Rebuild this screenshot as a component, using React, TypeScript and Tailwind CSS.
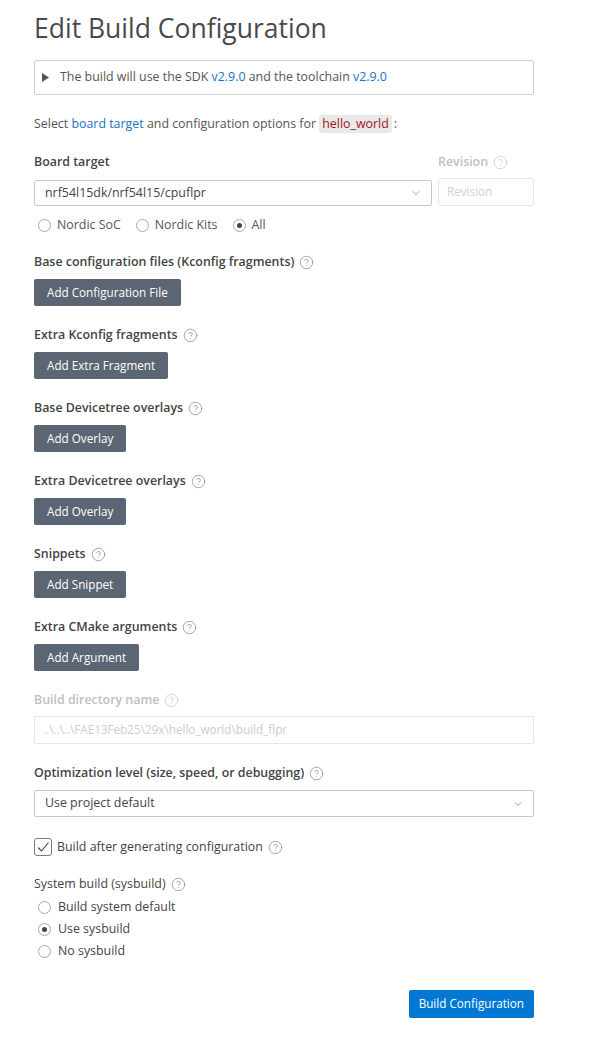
import React from "react";
import { ChevronDown, CircleHelp } from "lucide-react";

const Help = ({ disabled = false }: { disabled?: boolean }) => (
  <CircleHelp size={15} strokeWidth={1.2} className={disabled ? "text-[#c4c4c4] ml-[5px]" : "text-[#8a8a8a] ml-[5px]"} />
);

const Radio = ({ checked = false }: { checked?: boolean }) => (
  <span className="w-[13px] h-[13px] rounded-full border border-[#a8a8a8] bg-white flex items-center justify-center shrink-0">
    {checked && <span className="w-[5px] h-[5px] rounded-full bg-[#444]" />}
  </span>
);

const Label = ({ children, disabled = false }: { children: React.ReactNode; disabled?: boolean }) => (
  <div className={`h-[20px] flex items-center font-semibold ${disabled ? "text-[#c0c0c0]" : "text-[#444]"}`}>
    {children}
    <Help disabled={disabled} />
  </div>
);

const GrayButton = ({ children }: { children: React.ReactNode }) => (
  <button className="h-[27px] px-[13px] rounded-[2px] bg-[#5b6573] text-white text-[11.7px] mt-[7px]">{children}</button>
);

const Section = ({ label, button }: { label: string; button: string }) => (
  <div className="mt-[19px] flex flex-col items-start">
    <Label>{label}</Label>
    <GrayButton>{button}</GrayButton>
  </div>
);

export default function App() {
  return (
    <div
      className="w-[596px] min-h-[1048px] bg-white pl-[34px] pr-[62px] text-[12.4px] text-[#555]"
      style={{ fontFamily: '"Open Sans", "Noto Sans", sans-serif' }}
    >
      <h1 className="pt-[10px] h-[46px] leading-[36px] text-[26.5px] text-[#4a4a4a] font-normal">Edit Build Configuration</h1>

      <div className="mt-[14px] h-[35px] border border-[#cfcfcf] rounded-[2px] flex items-center px-[7px]">
        <svg width="8" height="9" viewBox="0 0 8 9" className="mr-[10px]">
          <path d="M0 0 L7 4.5 L0 9 Z" fill="#555" />
        </svg>
        <span>
          The build will use the SDK <span className="text-[#1a73c6]">v2.9.0</span> and the toolchain{" "}
          <span className="text-[#1a73c6]">v2.9.0</span>
        </span>
      </div>

      <div className="mt-[19px] h-[20px] flex items-center">
        Select&nbsp;<span className="text-[#1a73c6]">board target</span>&nbsp;and configuration options for&nbsp;
        <span className="bg-[#e9e9e9] text-[#a31515] rounded-[3px] px-[3px] leading-[18px]">hello_world</span>
        <span className="ml-[2px]">:</span>
      </div>

      <div className="mt-[18px] flex gap-[6px]">
        <div className="flex-1 flex flex-col">
          <div className="h-[20px] flex items-center font-semibold text-[#444]">Board target</div>
          <div className="mt-[8px] h-[26px] border border-[#c8c8c8] rounded-[2px] flex items-center justify-between pl-[10px] pr-[9px] text-[#444]">
            <span>nrf54l15dk/nrf54l15/cpuflpr</span>
            <ChevronDown size={12} strokeWidth={1.4} className="text-[#777]" />
          </div>
        </div>
        <div className="w-[96px] flex flex-col">
          <Label disabled>Revision</Label>
          <div className="mt-[6px] h-[28px] border border-[#e6e6e6] rounded-[2px] flex items-center px-[8px] text-[#cfcfcf] text-[11.7px]">
            Revision
          </div>
        </div>
      </div>

      <div className="mt-[9px] h-[20px] flex items-center pl-[4px] text-[#555]">
        <Radio />
        <span className="ml-[6px] mr-[15px]">Nordic SoC</span>
        <Radio />
        <span className="ml-[6px] mr-[15px]">Nordic Kits</span>
        <Radio checked />
        <span className="ml-[6px]">All</span>
      </div>

      <div className="-mt-[2px]">
        <Section label="Base configuration files (Kconfig fragments)" button="Add Configuration File" />
        <Section label="Extra Kconfig fragments" button="Add Extra Fragment" />
        <Section label="Base Devicetree overlays" button="Add Overlay" />
        <Section label="Extra Devicetree overlays" button="Add Overlay" />
        <Section label="Snippets" button="Add Snippet" />
        <Section label="Extra CMake arguments" button="Add Argument" />
      </div>

      <div className="mt-[19px]">
        <Label disabled>Build directory name</Label>
        <div className="mt-[6px] h-[28px] border border-[#e6e6e6] rounded-[2px] flex items-center px-[8px] text-[#cdcdcd] text-[11.7px]">
          ..\..\..\FAE13Feb25\29x\hello_world\build_flpr
        </div>
      </div>

      <div className="mt-[19px]">
        <Label>Optimization level (size, speed, or debugging)</Label>
        <div className="mt-[7px] h-[27px] border border-[#c8c8c8] rounded-[2px] flex items-center justify-between pl-[10px] pr-[9px] text-[#444]">
          <span>Use project default</span>
          <ChevronDown size={12} strokeWidth={1.4} className="text-[#777]" />
        </div>
      </div>

      <div className="mt-[20px] h-[20px] flex items-center text-[#444]">
        <span className="w-[18px] h-[18px] border border-[#7a7a7a] rounded-[3px] flex items-center justify-center">
          <svg width="14" height="14" viewBox="0 0 14 14">
            <path d="M2 7.5 L5.5 11 L12.5 2.5" fill="none" stroke="#444" strokeWidth="1.1" />
          </svg>
        </span>
        <span className="ml-[5px]">Build after generating configuration</span>
        <Help />
      </div>

      <div className="mt-[17px] h-[20px] flex items-center text-[#444]">
        System build (sysbuild)
        <Help />
      </div>
      <div className="mt-[2px] flex flex-col pl-[4px] text-[#444]">
        <div className="h-[22px] flex items-center"><Radio /><span className="ml-[7px]">Build system default</span></div>
        <div className="h-[22px] flex items-center"><Radio checked /><span className="ml-[7px]">Use sysbuild</span></div>
        <div className="h-[22px] flex items-center"><Radio /><span className="ml-[7px]">No sysbuild</span></div>
      </div>

      <div className="mt-[28px] flex justify-end">
        <button className="h-[28px] px-[10px] rounded-[2px] bg-[#0078d4] text-white text-[11.7px]">Build Configuration</button>
      </div>
    </div>
  );
}
